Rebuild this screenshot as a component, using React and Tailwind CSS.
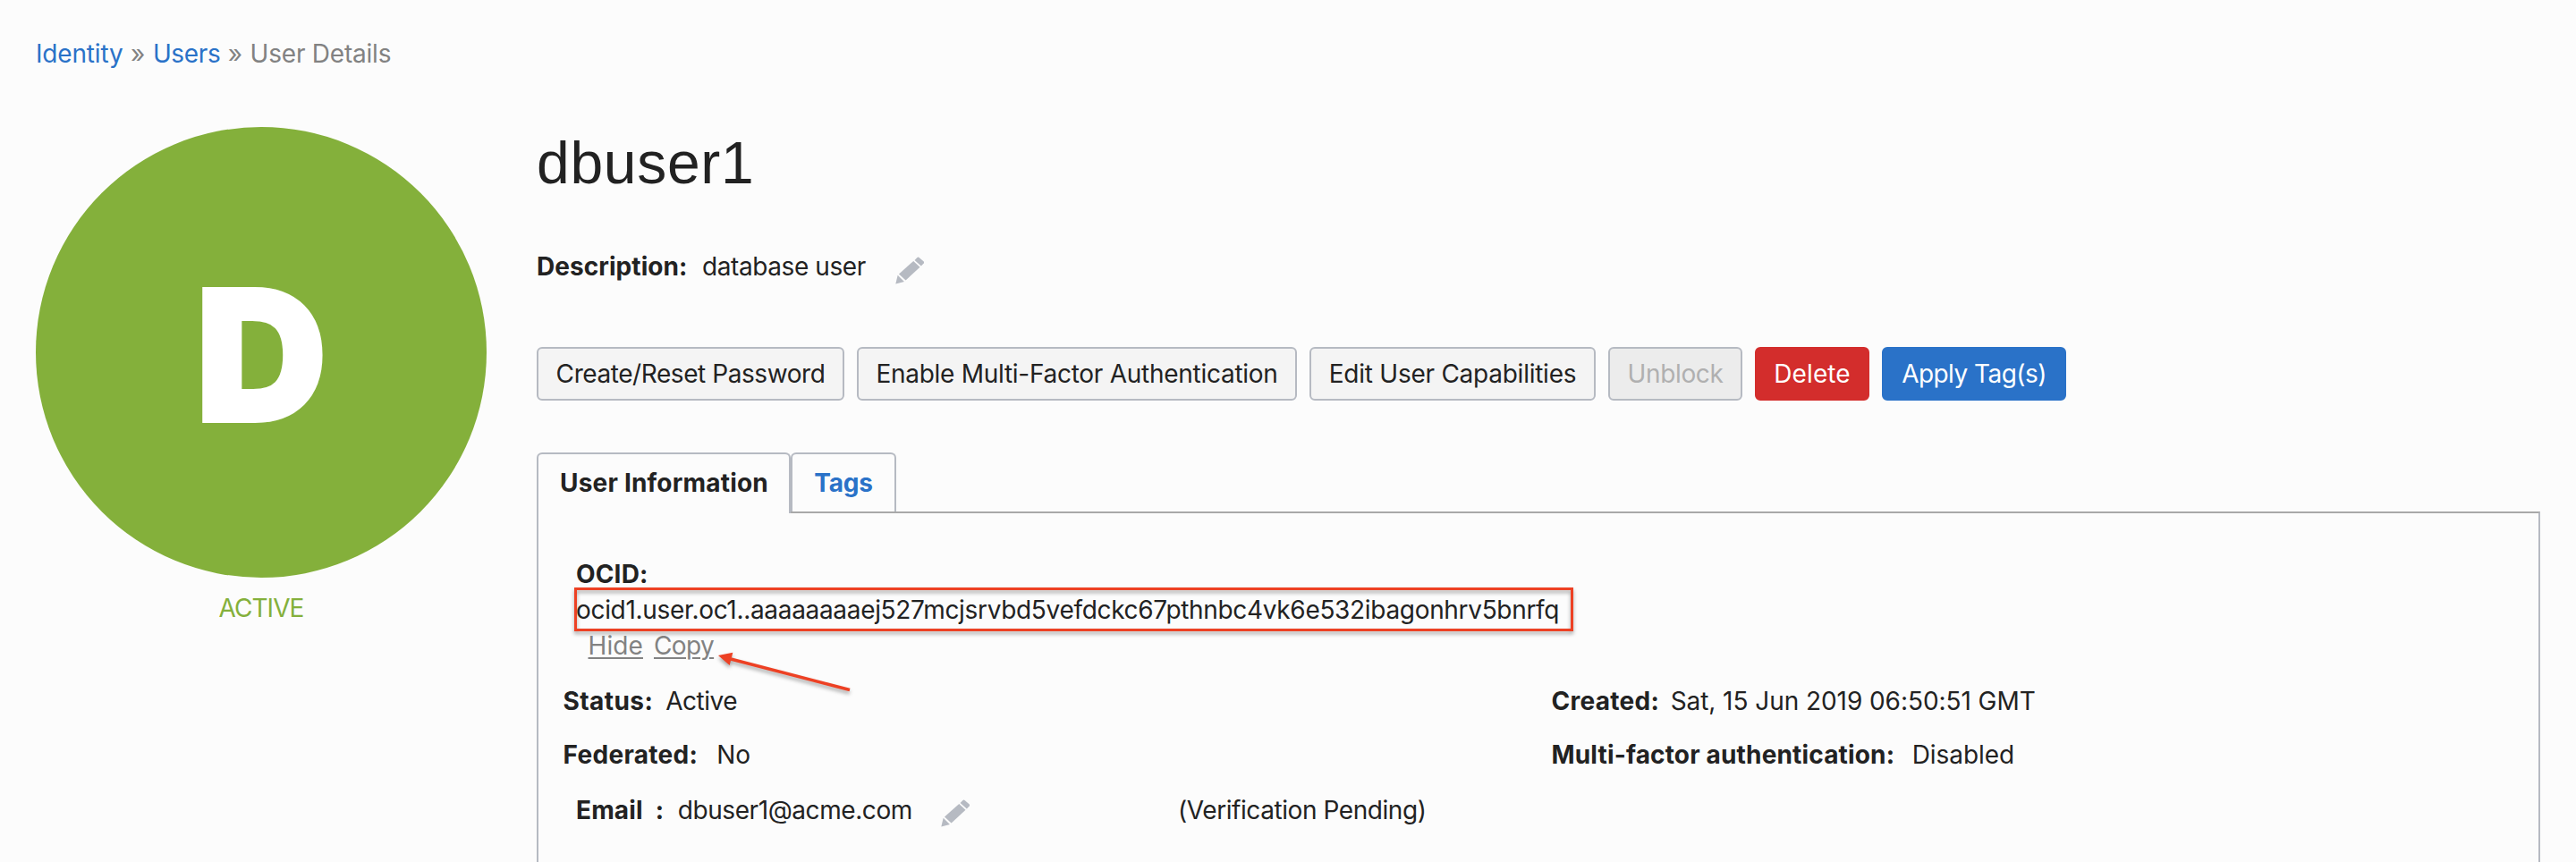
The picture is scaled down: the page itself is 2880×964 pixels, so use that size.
function Pencil({ className }) {
  return (
    <svg viewBox="31 35 98 92" className={`h-[31px] w-[32.5px] shrink-0 fill-[#b6bac2] ${className}`} aria-hidden="true">
      <path d="M39 97 L61 119 L32 126 Z" />
      <path d="M43 93 L92 49 L114 70 L66 114 Z" />
      <path d="M96 46 L104 38 Q108 34 112 38 L126 50 Q130 54 126 58 L118 66 Z" />
    </svg>
  );
}

function Arrow() {
  return (
    <svg
      viewBox="0 0 160 60"
      className="absolute top-[23px] left-[154.5px] h-[60px] w-[160px] drop-shadow-[0_3px_2px_rgba(0,0,0,0.35)]"
      aria-hidden="true"
    >
      <path d="M18 12 L151 46.5" stroke="#ed4124" strokeWidth="3.4" fill="none" />
      <path d="M4 8 L20.3 4.7 L16.7 19 Z" fill="#ed4124" />
    </svg>
  );
}

function Button({ className, children }) {
  return (
    <button
      className={`flex h-[60px] shrink-0 items-center justify-center rounded-[6px] border-2 leading-[56px] ${className}`}
    >
      {children}
    </button>
  );
}

const neutral = "border-[#b6bac2] bg-[#f4f4f4]";

export default function App() {
  return (
    <div className="h-[964px] w-[2880px] overflow-hidden bg-[#fcfcfc] pt-10 pl-10 font-['Inter','Liberation_Sans',sans-serif] text-[28px] leading-[40px] whitespace-nowrap text-[#222222]">
      <nav className="flex gap-[8.5px] text-[#828282]">
        <a className="tracking-[-0.17px] text-[#2a72c8]">Identity</a>
        <span>»</span>
        <a className="tracking-[-0.37px] text-[#2a72c8]">Users</a>
        <span>»</span>
        <span className="tracking-[-0.22px]">User Details</span>
      </nav>

      <div className="mt-[62px] flex">
        <aside className="flex w-[504px] shrink-0 flex-col items-center">
          <div className="flex h-[504px] w-[504px] items-center justify-center rounded-full bg-[#84b03b] pt-[5px]">
            <span className="text-[203px] leading-[210px] font-black text-white [-webkit-text-stroke:4px_white]">D</span>
          </div>
          <div className="mt-[14px] tracking-[-0.95px] text-[#84b03b]">ACTIVE</div>
        </aside>

        <main className="ml-14 w-[2240px] shrink-0">
          <h1 className="font-['Liberation_Sans',Arial,sans-serif] text-[66px] leading-[80px] tracking-[0.7px]">dbuser1</h1>

          <div className="mt-[56px] flex items-center">
            <span className="font-bold tracking-[0.06px]">Description:</span>
            <span className="ml-[16.5px] tracking-[-0.4px]">database user</span>
            <Pencil className="ml-[33px] translate-y-[4px]" />
          </div>

          <div className="mt-[70px] flex gap-[14px]">
            <Button className={`w-[344px] tracking-[-0.43px] ${neutral}`}>Create/Reset Password</Button>
            <Button className={`w-[492px] tracking-[-0.27px] ${neutral}`}>Enable Multi-Factor Authentication</Button>
            <Button className={`w-[320px] tracking-[-0.25px] ${neutral}`}>Edit User Capabilities</Button>
            <Button className="w-[150px] border-[#b6bac2] bg-[#ececec] tracking-[-0.35px] text-[#b0b0b0]">Unblock</Button>
            <Button className="w-[128px] border-[#d32d2c] bg-[#d32d2c] tracking-[0.1px] text-white">Delete</Button>
            <Button className="w-[206px] border-[#2a72c8] bg-[#2a72c8] tracking-[-0.55px] text-white">Apply Tag(s)</Button>
          </div>

          <div className="relative z-10 mt-[58px] -mb-[2px] flex h-[68px] items-start font-bold leading-[64px]">
            <div className="h-[68px] w-[284px] rounded-t-[6px] border-2 border-b-0 border-[#b6bac2] bg-[#fcfcfc] pl-px text-center tracking-[0.2px]">
              User Information
            </div>
            <div className="h-[66px] w-[118px] rounded-t-[6px] border-2 border-b-0 border-[#b6bac2] text-center tracking-[-0.2px] text-[#2a72c8]">
              Tags
            </div>
          </div>

          <section className="h-[392px] border-x-2 border-t-2 border-x-[#b6bac2] border-t-[#a9a9a9] pt-12 pl-[27.5px]">
            <div className="pl-[14.5px]">
              <div className="font-bold tracking-[0.16px]">OCID:</div>
              <div className="relative tracking-[-0.32px]">
                ocid1.user.oc1..aaaaaaaaej527mcjsrvbd5vefdckc67pthnbc4vk6e532ibagonhrv5bnrfq
                <div className="absolute -top-[5px] -left-[2px] h-[49px] w-[1117px] border-[3px] border-[#ed4124] drop-shadow-[0_3px_2px_rgba(0,0,0,0.35)]" />
              </div>
              <div className="relative flex gap-3 pl-[13.5px] text-[#828282]">
                <a className="tracking-[0.1px] underline decoration-2 underline-offset-[3px]">Hide</a>
                <a className="tracking-[-0.61px] underline decoration-2 underline-offset-[3px]">Copy</a>
                <Arrow />
              </div>
            </div>

            <div className="mt-[22px] grid grid-cols-[1105px_1fr] gap-y-5">
              <div className="flex gap-[14px]">
                <span className="font-bold tracking-[0.44px]">Status:</span>
                <span className="tracking-[-0.49px]">Active</span>
              </div>
              <div className="flex gap-[12.5px]">
                <span className="font-bold tracking-[0.29px]">Created:</span>
                <span className="tracking-[-0.06px]">Sat, 15 Jun 2019 06:50:51 GMT</span>
              </div>
              <div className="flex gap-[21px]">
                <span className="font-bold tracking-[0.31px]">Federated:</span>
                <span>No</span>
              </div>
              <div className="flex gap-[19.5px]">
                <span className="font-bold tracking-[0.16px]">Multi-factor authentication:</span>
                <span className="tracking-[-0.05px]">Disabled</span>
              </div>
            </div>

            <div className="mt-[22px] flex pl-[14.5px]">
              <div className="flex w-[673px] items-center">
                <span className="font-bold tracking-[0.15px]">Email</span>
                <span className="ml-[14px] w-[25px] font-bold">:</span>
                <span className="tracking-[-0.42px]">dbuser1@acme.com</span>
                <Pencil className="ml-8 translate-y-[3px]" />
              </div>
              <span className="tracking-[-0.43px]">(Verification Pending)</span>
            </div>
          </section>
        </main>
      </div>
    </div>
  );
}
